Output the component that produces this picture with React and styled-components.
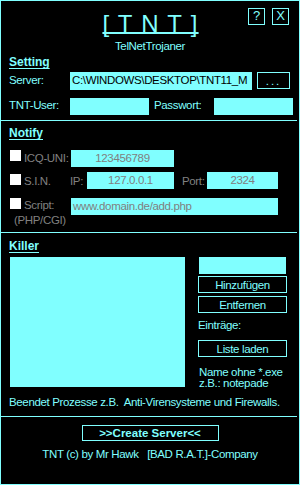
import React from "react";
import styled, { createGlobalStyle } from "styled-components";

const CYAN = "#80ffff";
const GREY = "#808080";
const BODY = `"Liberation Sans", Arial, sans-serif`;
const SANS = `"Liberation Sans", Arial, sans-serif`;

const Global = createGlobalStyle`
  html, body { margin: 0; padding: 0; background: #000; }
  * { box-sizing: border-box; }
`;

const Window = styled.div`
  width: 300px;
  height: 485px;
  border: 1px solid ${CYAN};
  background: #000;
  display: flex;
  flex-direction: column;
  font-family: ${BODY};
  font-size: 11.5px;
  letter-spacing: -0.35px;
  line-height: 14px;
  color: ${CYAN};
`;

const Header = styled.header`
  display: grid;
  grid-template-columns: 1fr auto 1fr;
  padding-top: 7px;
`;

const TitleBlock = styled.div`
  grid-column: 2;
  display: flex;
  flex-direction: column;
  align-items: center;
  padding-top: 4px;
`;

const Title = styled.h1`
  margin: 0;
  padding-left: 1px;
  font-family: ${SANS};
  font-weight: normal;
  font-size: 24px;
  line-height: 24px;
  letter-spacing: 1.25px;
  white-space: pre;
  text-decoration: underline;
  text-decoration-thickness: 2px;
  text-underline-offset: 0px;
  text-decoration-skip-ink: none;
`;

const Subtitle = styled.div`
  margin-top: 3px;
`;

const WinButtons = styled.div`
  grid-column: 3;
  justify-self: end;
  align-self: start;
  display: flex;
  gap: 7px;
  margin-right: 10px;
`;

const WinButton = styled.button`
  width: 17px;
  height: 17px;
  padding: 0;
  border: 1px solid ${CYAN};
  background: transparent;
  color: ${CYAN};
  font-family: ${SANS};
  font-size: 13px;
  line-height: 14px;
  display: flex;
  justify-content: center;
  align-items: flex-start;
`;

const Section = styled.section`
  display: flex;
  flex-direction: column;
  padding: 0 8px;
`;

const Heading = styled.h2`
  margin: ${(p) => p.$top}px 0 0;
  align-self: flex-start;
  font-family: ${SANS};
  font-weight: bold;
  font-size: 12px;
  letter-spacing: 0;
  line-height: 14px;
  text-decoration: underline;
  text-decoration-thickness: 1px;
  text-underline-offset: 2px;
  text-decoration-skip-ink: none;
`;

const Divider = styled.hr`
  flex-shrink: 0;
  height: 1px;
  border: 0;
  background: ${CYAN};
  margin: ${(p) => p.$top}px 2px 0 0;
`;

const Row = styled.div`
  display: flex;
  align-items: flex-start;
  margin-top: ${(p) => p.$top || 0}px;
`;

const Label = styled.span`
  flex-shrink: 0;
  white-space: nowrap;
  width: ${(p) => (p.$w ? `${p.$w}px` : "auto")};
  margin-left: ${(p) => p.$left || 0}px;
  margin-top: ${(p) => p.$top || 0}px;
  color: ${(p) => (p.$dim ? GREY : CYAN)};
`;

const Field = styled.div`
  flex-shrink: 0;
  width: ${(p) => p.$w}px;
  height: ${(p) => p.$h || 17}px;
  margin-left: ${(p) => p.$left || 0}px;
  margin-top: ${(p) => p.$top || 0}px;
  padding: 0 2px;
  background: ${CYAN};
  color: ${(p) => (p.$dim ? GREY : "#000")};
  text-align: ${(p) => p.$align || "left"};
  line-height: 16px;
  white-space: nowrap;
  overflow: hidden;
`;

const Button = styled.button`
  flex-shrink: 0;
  display: block;
  width: ${(p) => p.$w}px;
  height: ${(p) => p.$h || 17}px;
  margin-left: ${(p) => p.$left || 0}px;
  margin-top: ${(p) => p.$top || 0}px;
  padding: 0;
  border: 1px solid ${CYAN};
  background: transparent;
  color: ${CYAN};
  font-family: ${BODY};
  font-size: 11.5px;
  letter-spacing: ${(p) => (p.$spacing != null ? p.$spacing : -0.35)}px;
  line-height: 14px;
  text-align: center;
  overflow: hidden;
`;

const Check = styled.span`
  flex-shrink: 0;
  display: block;
  width: 11px;
  height: 11px;
  background: #fff;
  margin-left: 1px;
  margin-right: 3px;
  margin-top: ${(p) => p.$top || 0}px;
`;

const ScriptGrid = styled.div`
  display: grid;
  grid-template-columns: 15px 47px 207px;
  grid-template-rows: 15px 15px;
  margin-top: 8px;
`;

const GridCheck = styled(Check)`
  grid-column: 1;
  grid-row: 1;
  margin-top: 1px;
`;

const GridLabel = styled.span`
  grid-column: ${(p) => p.$col};
  grid-row: ${(p) => p.$row};
  padding-left: ${(p) => p.$pad || 0}px;
  margin-top: 1px;
  color: ${GREY};
  white-space: nowrap;
`;

const GridField = styled(Field)`
  grid-column: 3;
  grid-row: 1 / span 2;
  align-self: start;
`;

const KillerBody = styled.div`
  display: flex;
  align-items: flex-start;
  margin-top: 4px;
`;

const ListBox = styled.div`
  width: 175px;
  height: 130px;
  margin-left: 1px;
  background: ${CYAN};
`;

const Side = styled.div`
  width: 89px;
  margin-left: 13px;
  display: flex;
  flex-direction: column;
`;

const Note = styled.div`
  margin-top: 10px;
  margin-left: 1px;
  line-height: 11px;
  white-space: nowrap;
`;

const Text = styled.div`
  margin-top: ${(p) => p.$top || 0}px;
  white-space: pre;
`;

const Footer = styled.footer`
  display: flex;
  flex-direction: column;
  align-items: center;
`;

const CreateButton = styled.button`
  width: 137px;
  height: 16px;
  margin-top: 8px;
  padding: 0;
  border: 1px solid ${CYAN};
  background: transparent;
  color: ${CYAN};
  font-family: ${SANS};
  font-weight: bold;
  font-size: 11.5px;
  line-height: 12px;
  text-align: center;
`;

export default function App() {
  return (
    <>
      <Global />
      <Window>
        <Header>
          <TitleBlock>
            <Title>[ T N T ]</Title>
            <Subtitle>TelNetTrojaner</Subtitle>
          </TitleBlock>
          <WinButtons>
            <WinButton>?</WinButton>
            <WinButton>X</WinButton>
          </WinButtons>
        </Header>

        <Section>
          <Heading $top={2}>Setting</Heading>
          <Row $top={3}>
            <Label $w={61} $top={1}>Server:</Label>
            <Field $w={182} $h={18}>C:\WINDOWS\DESKTOP\TNT11_M</Field>
            <Button $w={33} $left={5} $spacing={2}>...</Button>
          </Row>
          <Row $top={8}>
            <Label $w={61}>TNT-User:</Label>
            <Field $w={79} />
            <Label $w={60} $left={5}>Passwort:</Label>
            <Field $w={79} />
          </Row>
        </Section>

        <Divider $top={5} />

        <Section>
          <Heading $top={5}>Notify</Heading>
          <Row $top={10}>
            <Check />
            <Label $w={47} $top={1} $dim>ICQ-UNI:</Label>
            <Field $w={103} $dim $align="center">123456789</Field>
          </Row>
          <Row $top={5}>
            <Check $top={2} />
            <Label $w={46} $top={2} $dim>S.I.N.</Label>
            <Label $w={17} $top={2} $dim>IP:</Label>
            <Field $w={87} $dim $align="center">127.0.0.1</Field>
            <Label $w={25} $left={8} $top={2} $dim>Port:</Label>
            <Field $w={71} $dim $align="center">2324</Field>
          </Row>
          <ScriptGrid>
            <GridCheck />
            <GridLabel $col={2} $row={1}>Script:</GridLabel>
            <GridLabel $col="1 / span 2" $row={2} $pad={5}>(PHP/CGI)</GridLabel>
            <GridField $w={207} $top={1} $dim>www.domain.de/add.php</GridField>
          </ScriptGrid>
        </Section>

        <Divider $top={5} />

        <Section>
          <Heading $top={6}>Killer</Heading>
          <KillerBody>
            <ListBox />
            <Side>
              <Field $w={87} $left={1} />
              <Button $w={89} $top={2}>Hinzufügen</Button>
              <Button $w={89} $top={3}>Entfernen</Button>
              <Text $top={5}>Einträge:</Text>
              <Button $w={89} $top={8}>Liste laden</Button>
              <Note>
                Name ohne *.exe
                <br />
                z.B.: notepade
              </Note>
            </Side>
          </KillerBody>
          <Text $top={6}>Beendet Prozesse z.B.  Anti-Virensysteme und Firewalls.</Text>
        </Section>

        <Divider $top={7} />

        <Footer>
          <CreateButton>&gt;&gt;Create Server&lt;&lt;</CreateButton>
          <Text $top={6}>TNT (c) by Mr Hawk   [BAD R.A.T.]-Company</Text>
        </Footer>
      </Window>
    </>
  );
}
